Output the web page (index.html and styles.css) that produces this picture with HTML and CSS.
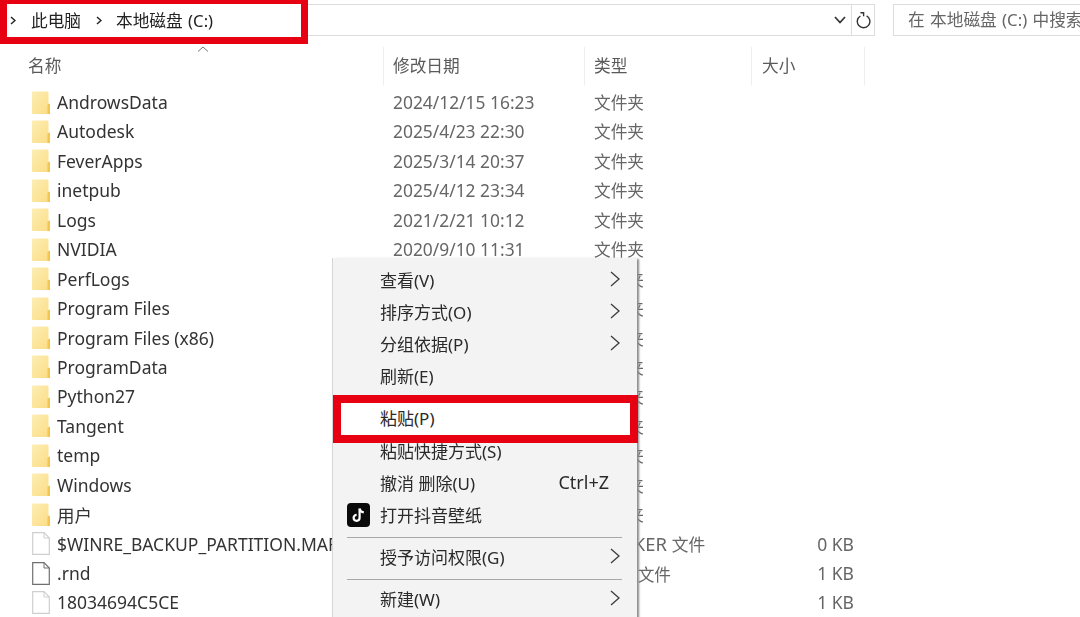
FILE: index.html
```html
<!DOCTYPE html>
<html lang="zh-CN">
<head>
<meta charset="utf-8">
<title>本地磁盘 (C:)</title>
<link rel="stylesheet" href="styles.css">
</head>
<body>
<svg class="defs" width="0" height="0" aria-hidden="true">
  <defs>
    <linearGradient id="fg" x1="0" y1="0" x2="1" y2="1">
      <stop offset="0" stop-color="#fdeeb4"/>
      <stop offset="1" stop-color="#fbdc84"/>
    </linearGradient>
    <symbol id="folder" viewBox="0 0 18 23">
      <path d="M0 1.5Q0 .5 1 .5H15.5Q16.5 .5 16.5 1.5V13L18 12.5V23H1Q0 23 0 22Z" fill="url(#fg)"/>
      <path d="M16 13.5L18 12.5V23H15.5V14Z" fill="#f3c64f"/>
    </symbol>
    <symbol id="file" viewBox="0 0 18 23">
      <path d="M.7 .7H12L17.3 6V22.3H.7Z" fill="#fff" stroke="currentColor" stroke-width="1.2"/>
      <path d="M12 .7V6H17.3" fill="none" stroke="currentColor" stroke-width="1"/>
    </symbol>
    <symbol id="chev" viewBox="0 0 10 16">
      <path d="M1 1L9 8L1 15" fill="none" stroke="#3c3c3c" stroke-width="1.3"/>
    </symbol>
    <symbol id="crumb-chev" viewBox="0 0 6 9">
      <path d="M1 1L5 4.5L1 8" fill="none" stroke="#222" stroke-width="1.5"/>
    </symbol>
  </defs>
</svg>

<div class="page">
  <header class="toolbar">
    <div class="address">
      <div class="crumbs">
        <svg class="crumb-mark"><use href="#crumb-chev"/></svg><span class="crumb">此电脑</span><svg class="crumb-mark"><use href="#crumb-chev"/></svg><span class="crumb crumb-last">本地磁盘 (C:)</span>
      </div>
      <div class="addr-fill"></div>
      <svg class="drop" width="12" height="8" viewBox="0 0 12 8"><path d="M1 1L6 6.5L11 1" fill="none" stroke="#333" stroke-width="1.7"/></svg>
      <div class="refresh">
        <svg width="15" height="17" viewBox="0 0 15 17"><path d="M4.4 4A6.3 6.3 0 1 0 10.6 3.9" fill="none" stroke="#333" stroke-width="1.4"/><path d="M4.4 .8H7.6V4.2" fill="none" stroke="#333" stroke-width="1.4"/></svg>
      </div>
    </div>
    <div class="search">在 本地磁盘 (C:) 中搜索</div>
  </header>

  <div class="head">
    <span class="sort"><svg width="12" height="6" viewBox="0 0 12 6"><path d="M1 5.5L6 1L11 5.5" fill="none" stroke="#777" stroke-width="1"/></svg></span>
    <div class="hcell h-name">名称</div>
    <div class="hcell h-date">修改日期</div>
    <div class="hcell h-type">类型</div>
    <div class="hcell h-size">大小</div>
  </div>

  <div class="list">
    <div class="row"><svg class="ico"><use href="#folder"/></svg><span class="name">AndrowsData</span><span class="date">2024/12/15 16:23</span><span class="type">文件夹</span><span class="size"></span></div>
    <div class="row"><svg class="ico"><use href="#folder"/></svg><span class="name">Autodesk</span><span class="date">2025/4/23 22:30</span><span class="type">文件夹</span><span class="size"></span></div>
    <div class="row"><svg class="ico"><use href="#folder"/></svg><span class="name">FeverApps</span><span class="date">2025/3/14 20:37</span><span class="type">文件夹</span><span class="size"></span></div>
    <div class="row"><svg class="ico"><use href="#folder"/></svg><span class="name">inetpub</span><span class="date">2025/4/12 23:34</span><span class="type">文件夹</span><span class="size"></span></div>
    <div class="row"><svg class="ico"><use href="#folder"/></svg><span class="name">Logs</span><span class="date">2021/2/21 10:12</span><span class="type">文件夹</span><span class="size"></span></div>
    <div class="row"><svg class="ico"><use href="#folder"/></svg><span class="name">NVIDIA</span><span class="date">2020/9/10 11:31</span><span class="type">文件夹</span><span class="size"></span></div>
    <div class="row"><svg class="ico"><use href="#folder"/></svg><span class="name">PerfLogs</span><span class="date"></span><span class="type">文件夹</span><span class="size"></span></div>
    <div class="row"><svg class="ico"><use href="#folder"/></svg><span class="name">Program Files</span><span class="date"></span><span class="type">文件夹</span><span class="size"></span></div>
    <div class="row"><svg class="ico"><use href="#folder"/></svg><span class="name">Program Files (x86)</span><span class="date"></span><span class="type">文件夹</span><span class="size"></span></div>
    <div class="row"><svg class="ico"><use href="#folder"/></svg><span class="name">ProgramData</span><span class="date"></span><span class="type">文件夹</span><span class="size"></span></div>
    <div class="row"><svg class="ico"><use href="#folder"/></svg><span class="name">Python27</span><span class="date"></span><span class="type">文件夹</span><span class="size"></span></div>
    <div class="row"><svg class="ico"><use href="#folder"/></svg><span class="name">Tangent</span><span class="date"></span><span class="type">文件夹</span><span class="size"></span></div>
    <div class="row"><svg class="ico"><use href="#folder"/></svg><span class="name">temp</span><span class="date"></span><span class="type">文件夹</span><span class="size"></span></div>
    <div class="row"><svg class="ico"><use href="#folder"/></svg><span class="name">Windows</span><span class="date"></span><span class="type">文件夹</span><span class="size"></span></div>
    <div class="row"><svg class="ico"><use href="#folder"/></svg><span class="name">用户</span><span class="date"></span><span class="type">文件夹</span><span class="size"></span></div>
    <div class="row"><svg class="ico ico-light"><use href="#file"/></svg><span class="name">$WINRE_BACKUP_PARTITION.MARKER</span><span class="date"></span><span class="type"><span class="ext">MARKER </span>文件</span><span class="size">0 KB</span></div>
    <div class="row"><svg class="ico ico-dark"><use href="#file"/></svg><span class="name">.rnd</span><span class="date"></span><span class="type"><span class="ext">RND </span>文件</span><span class="size">1 KB</span></div>
    <div class="row"><svg class="ico ico-light"><use href="#file"/></svg><span class="name">18034694C5CE</span><span class="date"></span><span class="type">文件</span><span class="size">1 KB</span></div>
  </div>

  <nav class="menu">
    <div class="item"><span>查看(V)</span><svg class="arrow"><use href="#chev"/></svg></div>
    <div class="item"><span>排序方式(O)</span><svg class="arrow"><use href="#chev"/></svg></div>
    <div class="item"><span>分组依据(P)</span><svg class="arrow"><use href="#chev"/></svg></div>
    <div class="item"><span>刷新(E)</span></div>
    <div class="gap"></div>
    <div class="item paste"><span>粘贴(P)</span></div>
    <div class="item after-paste"><span>粘贴快捷方式(S)</span></div>
    <div class="item"><span>撤消 删除(U)</span><span class="shortcut">Ctrl+Z</span></div>
    <div class="item">
      <svg class="tiktok" width="23" height="24" viewBox="0 0 23 24">
        <rect width="23" height="24" rx="4" fill="#0a0a0a"/>
        <path d="M12.6 5.5V14.8A3 3 0 1 1 9.6 11.8" fill="none" stroke="#fff" stroke-width="2.2"/>
        <path d="M12.6 5.8C13 8 14.6 9.2 16.8 9.4" fill="none" stroke="#fff" stroke-width="2.2"/>
      </svg>
      <span>打开抖音壁纸</span>
    </div>
    <div class="gap line"></div>
    <div class="item"><span>授予访问权限(G)</span><svg class="arrow"><use href="#chev"/></svg></div>
    <div class="gap line"></div>
    <div class="item"><span>新建(W)</span><svg class="arrow"><use href="#chev"/></svg></div>
  </nav>
</div>
</body>
</html>
```
FILE: styles.css
```css
* { box-sizing: border-box; }
html, body { margin: 0; padding: 0; background: #fff; }
body {
  font-family: "Noto Sans", "Noto Sans CJK SC", sans-serif;
  font-size: 16.7px;
  color: #333;
}
.defs { position: absolute; }
.page {
  position: relative;
  width: 1080px;
  height: 617px;
  overflow: hidden;
  filter: blur(0.35px);
}

/* toolbar */
.toolbar {
  display: flex;
  align-items: flex-start;
  height: 47px;
  padding-top: 4px;
}
.address {
  display: flex;
  align-items: center;
  width: 875px;
  height: 32px;
  border: 1px solid #dcdcdc;
  border-left: 0;
}
.crumbs {
  display: flex;
  align-items: center;
  flex: none;
  width: 294px;
  height: 33px;
  margin-left: 7px;
  outline: 7px solid #e60012;
  color: #222;
  background: #fff;
  position: relative;
  z-index: 2;
}
.crumb-mark { width: 6px; height: 9px; margin-left: 3px; margin-right: 15px; flex: none; }
.crumb { width: 65px; white-space: nowrap; }
.crumb-last { width: auto; margin-left: -1px; word-spacing: 1px; }
.crumbs .crumb + .crumb-mark { margin-left: 0; }
.addr-fill { flex: 1; }
.drop { margin-right: 5px; }
.refresh {
  display: flex;
  align-items: center;
  justify-content: center;
  width: 23px;
  height: 100%;
  border-left: 1px solid #dcdcdc;
}
.search {
  width: 187px;
  height: 32px;
  margin-left: 18px;
  padding-left: 14px;
  line-height: 30px;
  border: 1px solid #dcdcdc;
  border-right: 0;
  color: #666;
  white-space: nowrap;
  overflow: hidden;
  word-spacing: 1px;
}

/* column header */
.head {
  position: relative;
  display: grid;
  grid-template-columns: 384px 201px 167px 113px;
  height: 36px;
}
.hcell {
  line-height: 38px;
  padding-left: 9px;
  color: #5a5a5a;
  border-right: 1px solid #eeeeee;
}
.h-name { padding-left: 28px; }
.h-size { padding-left: 10px; }
.sort { position: absolute; left: 197px; top: -1px; line-height: 0; }

/* rows */
.list { margin-top: 4.3px; }
.row {
  display: grid;
  grid-template-columns: 18px 343px 201px 168px 92px;
  align-items: center;
  height: 29.45px;
  margin-left: 32px;
  white-space: nowrap;
}
.ico { width: 18px; height: 23px; }
.ico-light { color: #cfcfcf; }
.ico-dark { color: #707070; }
.name { padding-left: 7px; width: 282px; overflow: hidden; color: #333; font-size: 17.5px; }
.date { color: #666; font-size: 17.4px; }
.type { color: #666; }
.ext { font-size: 18.4px; }
.size { text-align: right; color: #666; font-size: 17.5px; }

/* context menu */
.menu {
  position: absolute;
  left: 332px;
  top: 258px;
  width: 305px;
  height: 370px;
  padding-top: 7px;
  background: #f3f3f3;
  border-left: 1px solid #d6d6d6;
  box-shadow: 3px 0 2px -1px #8a8a8a;
  color: #2a2a2a;
  font-size: 17px;
}
.item {
  position: relative;
  display: flex;
  align-items: center;
  justify-content: space-between;
  height: 32px;
  padding: 0 17px 4px 47px;
  white-space: nowrap;
}
.gap { height: 10px; }
.gap.line { position: relative; }
.gap.line::after {
  content: "";
  position: absolute;
  left: 14px;
  right: 15px;
  top: 5px;
  border-top: 1px solid #a8a8a8;
}
.paste {
  margin: 0 7px 0 8px;
  padding-left: 39px;
  background: #fff;
  outline: 8px solid #e60012;
  z-index: 2;
}
.after-paste { margin-top: 1px; }
.arrow { width: 10px; height: 16px; }
.shortcut { margin-right: 11px; font-size: 18px; }
.tiktok { position: absolute; left: 14px; top: 3px; }
```
